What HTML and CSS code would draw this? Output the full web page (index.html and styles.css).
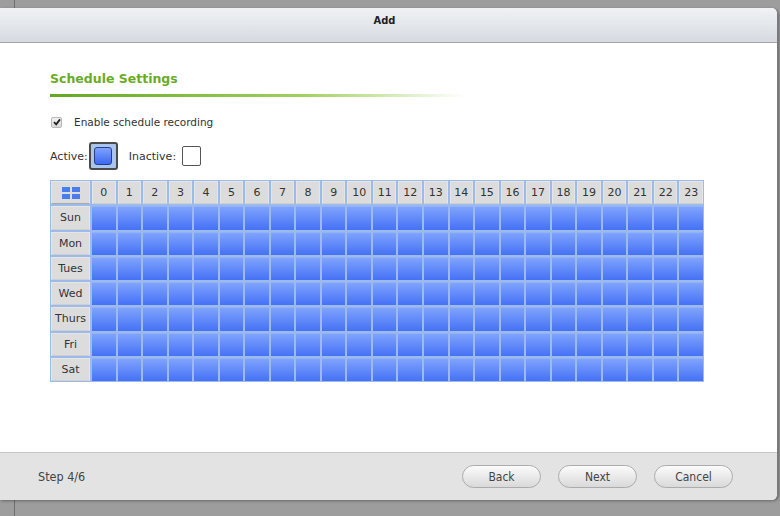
FILE: index.html
```html
<!DOCTYPE html>
<html lang="en">

<head>
    <meta charset="UTF-8">
    <meta name="viewport" content="width=device-width, initial-scale=1.0">
    <title>Add</title>
    <link rel="stylesheet" href="styles.css">
</head>

<body>
    <div class="dialog">
        <div class="titlebar">Add</div>

        <div class="content">
            <p class="sectiontitle">Schedule Settings</p>
            <div class="sectionline"></div>

            <div class="checkrow">
                <span class="checkbox">
                    <svg width="8" height="8" viewBox="0 0 8 8"><path d="M1 4.2 L3.2 6.4 L7 1.4" fill="none" stroke="#222" stroke-width="1.8"/></svg>
                </span>
                <span>Enable schedule recording</span>
            </div>

            <div class="legend">
                <span>Active:</span>
                <span class="activeswatch"><span class="activeinner"></span></span>
                <span class="inactivelabel">Inactive:</span>
                <span class="inactiveswatch"></span>
            </div>

            <div class="schedule" id="schedule">
                <div class="head corner">
                    <span class="cornericon"><i></i><i></i><i></i><i></i></span>
                </div>
            </div>
        </div>

        <div class="footer">
            <span class="step">Step 4/6</span>
            <div class="buttons">
                <button class="pill">Back</button>
                <button class="pill">Next</button>
                <button class="pill">Cancel</button>
            </div>
        </div>
    </div>

    <script>
        var schedule = document.getElementById("schedule")
        var days = ["Sun", "Mon", "Tues", "Wed", "Thurs", "Fri", "Sat"]

        for (let h = 0; h < 24; h++) {
            var cell = document.createElement("div")
            cell.className = "head"
            cell.innerHTML = h
            schedule.appendChild(cell)
        }
        days.forEach(day => {
            var label = document.createElement("div")
            label.className = "head"
            label.innerHTML = day
            schedule.appendChild(label)
            for (let h = 0; h < 24; h++) {
                var slot = document.createElement("div")
                slot.className = "slot"
                schedule.appendChild(slot)
            }
        })
    </script>
</body>

</html>
```

FILE: styles.css
```css
body {
    margin: 0;
    padding: 0;
    height: 516px;
    overflow: hidden;
    background: linear-gradient(to right, #9d9d9d 14px, #6f6f6f 14px, #6f6f6f 15px, #9d9d9d 15px);
    font-family: "DejaVu Sans", Verdana, sans-serif;
    color: #333;
}

.dialog {
    margin-top: 8px;
    width: 777px;
    height: 492px;
    background-color: white;
    border-right: 1px solid #7a7a7a;
    border-radius: 0 6px 6px 0;
    box-shadow: 1px 1px 3px rgba(0, 0, 0, 0.35);
    display: flex;
    flex-direction: column;
    overflow: hidden;
}

.titlebar {
    height: 35px;
    line-height: 26px;
    text-align: center;
    font-family: "DejaVu Sans Condensed", "DejaVu Sans", sans-serif;
    font-stretch: condensed;
    font-weight: bold;
    font-size: 11px;
    color: #222;
    padding-right: 8px;
    background: linear-gradient(#f0f2f5, #d6dae0);
    border-bottom: 1px solid #a5a8ad;
    box-sizing: border-box;
}

.content {
    flex: 1;
    padding: 27px 0 0 50px;
}

.sectiontitle {
    margin: 0;
    font-size: 12.5px;
    font-weight: bold;
    color: #6aab25;
    line-height: 17px;
}

.sectionline {
    margin-top: 7px;
    width: 415px;
    height: 3px;
    background: linear-gradient(to right, #63a820, #9fd05c 60%, rgba(220, 240, 200, 0) 100%);
}

.checkrow {
    display: flex;
    align-items: center;
    margin-top: 18px;
    font-size: 10.5px;
    height: 14px;
}

.checkbox {
    width: 9px;
    height: 9px;
    margin-left: 1px;
    margin-right: 12px;
    border: 1px solid #b8b8b8;
    border-radius: 2px;
    background: linear-gradient(#f2f2f2, #d8d8d8);
    display: flex;
    align-items: center;
    justify-content: center;
}

.legend {
    display: flex;
    align-items: center;
    margin-top: 12px;
    height: 30px;
    font-size: 11px;
}

.activeswatch {
    width: 25px;
    height: 24px;
    margin-left: 1px;
    border: 2px solid #4a4a4a;
    border-radius: 3px;
    background-color: #a9c4f0;
    display: flex;
    align-items: center;
    justify-content: center;
}

.activeinner {
    width: 16px;
    height: 16px;
    border: 1px solid #2a3f80;
    border-radius: 3px;
    background: linear-gradient(#7ea2ff, #3d68f2);
}

.inactivelabel {
    margin-left: 11px;
    margin-right: 6px;
}

.inactiveswatch {
    width: 17px;
    height: 18px;
    border: 1px solid #555;
    border-radius: 2px;
    background-color: white;
}

.schedule {
    margin-top: 9px;
    width: 654px;
    box-sizing: border-box;
    display: grid;
    grid-template-columns: 39px repeat(24, 1fr);
    grid-auto-rows: 23.25px;
    gap: 2px;
    padding: 1px;
    background-color: #9cbbea;
}

.head {
    background-color: #dcdcdc;
    border: 1px solid #e6e6e6;
    border-bottom-color: #cfcfcf;
    display: flex;
    align-items: center;
    justify-content: center;
    font-size: 11px;
    color: #333;
}

.corner {
    border-bottom: 1px solid #a8a8a8;
}

.cornericon {
    display: grid;
    grid-template-columns: 8px 8px;
    grid-template-rows: 5px 5px;
    gap: 2px;
}

.cornericon i {
    background-color: #4a7cf0;
}

.slot {
    background: linear-gradient(#7fa3fd, #4571f5);
    border-top: 1px solid #92b2f8;
}

.footer {
    height: 47px;
    border-top: 1px solid #c6c6c6;
    background-color: #e3e3e3;
    display: flex;
    align-items: center;
    justify-content: space-between;
    padding: 0 44px 0 38px;
    font-family: "DejaVu Sans Condensed", "DejaVu Sans", sans-serif;
    font-stretch: condensed;
    font-size: 12.5px;
    color: #444;
}

.buttons {
    display: flex;
    gap: 17px;
}

.pill {
    width: 79px;
    height: 23px;
    border: 1px solid #acacac;
    border-radius: 12px;
    background: linear-gradient(#fbfbfb, #d9d9d9);
    font-family: "DejaVu Sans Condensed", "DejaVu Sans", sans-serif;
    font-stretch: condensed;
    font-size: 12px;
    color: #444;
    padding: 0;
}
```
